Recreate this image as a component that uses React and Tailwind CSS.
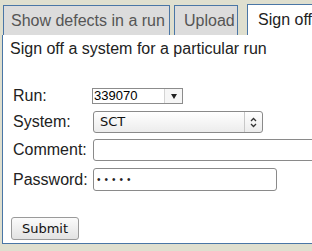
import React from "react";

const Tab = ({ label, active, className }) => (
  <div
    className={`flex items-center border border-b-0 border-[#4a76a6] text-[16px] leading-[18px] whitespace-nowrap ${
      active ? "h-[31px] bg-white text-[#222]" : "h-[30px] bg-[#dcdcdc] text-[#555]"
    } ${className}`}
  >
    {label}
  </div>
);

const Row = ({ label, className, children }) => (
  <div className={`flex items-center ${className}`}>
    <div className="w-[79px] shrink-0 ml-[3px] text-[16px] leading-[18px] text-[#222]">{label}</div>
    {children}
  </div>
);

export default function App() {
  return (
    <div className="w-[312px] h-[251px] overflow-hidden bg-[#dfdfcf] font-['Liberation_Sans',Arial,sans-serif]">
      {/* tabs */}
      <div className="flex items-end h-[35px] pl-[3px]">
        <Tab label="Show defects in a run" className="w-[170px] pl-[7px]" />
        <Tab label="Upload" className="w-[65px] pl-[9px] ml-[4px]" />
        <Tab label="Sign off" active className="flex-1 border-r-0 pl-[10px] ml-[9px]" />
      </div>

      {/* panel */}
      <div className="ml-[2px] h-[209px] bg-white border-l border-b border-[#4a76a6] pl-[7px] pt-[5px]">
        <p className="text-[16px] leading-[18px] text-[#222] whitespace-nowrap">
          Sign off a system for a particular run
        </p>

        <Row label="Run:" className="mt-[30px] h-[16px]">
          <div className="flex h-[16px] w-[91px] shrink-0 border border-[#8c8c8c] bg-white">
            <div className="flex-1 pl-[1px] text-[13px] leading-[14px] text-black">339070</div>
            <div className="w-[18px] flex items-center justify-center border-l border-[#d4d4d4] bg-[#f6f6f6]">
              <svg width="6" height="5" viewBox="0 0 6 5">
                <path d="M0 0 L6 0 L3 5 Z" fill="#222" />
              </svg>
            </div>
          </div>
        </Row>

        <Row label="System:" className="mt-[7px] h-[22px]">
          <div className="ml-[1px] flex h-[22px] w-[170px] shrink-0 rounded-[3px] border border-[#8a8a8a] bg-gradient-to-b from-white to-[#ececec]">
            <div className="flex-1 pl-[6px] flex items-center text-[13px] text-[#111] font-['DejaVu_Sans',sans-serif]">
              SCT
            </div>
            <div className="w-[18px] flex items-center justify-center border-l border-[#c8c8c8]">
              <svg width="7" height="11" viewBox="0 0 7 11" fill="none" stroke="#333" strokeWidth="1.3">
                <path d="M1 4 L3.5 1.5 L6 4" />
                <path d="M1 7 L3.5 9.5 L6 7" />
              </svg>
            </div>
          </div>
        </Row>

        <Row label="Comment:" className="mt-[6px] h-[22px]">
          <div className="ml-[1px] h-[22px] w-[240px] shrink-0 rounded-[3px] border border-[#8a8a8a] bg-white" />
        </Row>

        <Row label="Password:" className="mt-[7px] h-[23px]">
          <div className="ml-[1px] flex items-center h-[23px] w-[184px] shrink-0 rounded-[3px] border border-[#8a8a8a] bg-white pl-[3px]">
            <span className="text-[10px] tracking-[4px] text-[#222]">•••••</span>
          </div>
        </Row>

        <button className="mt-[26px] ml-[1px] h-[23px] w-[68px] rounded-[3px] border border-[#9a9a9a] bg-gradient-to-b from-[#fbfbfb] to-[#e2e2e2] text-[13px] text-[#111] font-['DejaVu_Sans',sans-serif]">
          Submit
        </button>
      </div>
    </div>
  );
}
